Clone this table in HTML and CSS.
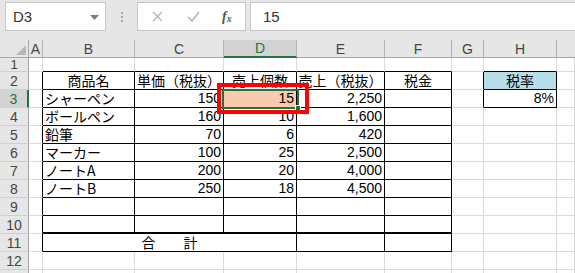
FILE: index.html
```html
<!DOCTYPE html>
<html lang="ja">
<head>
<meta charset="utf-8">
<link rel="stylesheet" href="styles.css">
</head>
<body>
<div class="app">
  <div class="toolbar">
    <div class="namebox">
      <span class="name">D3</span>
      <svg class="dd" width="9" height="5" viewBox="0 0 9 5"><polygon points="0,0 9,0 4.5,5" fill="#7a7a7a"/></svg>
    </div>
    <div class="dots"><i></i><i></i><i></i></div>
    <div class="fxgroup">
      <svg class="ico" width="11" height="11" viewBox="0 0 11 11"><path d="M1 1 L10 10 M10 1 L1 10" stroke="#b4b4b4" stroke-width="1.4" fill="none"/></svg>
      <svg class="ico" width="13" height="11" viewBox="0 0 13 11"><path d="M1 6 L5 10 L12 1" stroke="#b4b4b4" stroke-width="1.6" fill="none"/></svg>
      <span class="fx">f<sub>x</sub></span>
    </div>
    <div class="formula">15</div>
  </div>

  <div class="sheet">
    <!-- column headers -->
    <div class="ch corner"><svg width="10" height="10" viewBox="0 0 10 10"><polygon points="10,0 10,10 0,10" fill="#b8b8b8"/></svg></div>
    <div class="ch">A</div><div class="ch">B</div><div class="ch">C</div><div class="ch sel">D</div><div class="ch">E</div><div class="ch">F</div><div class="ch">G</div><div class="ch">H</div><div class="ch last"></div>

    <!-- row 1 -->
    <div class="rh short">1</div>
    <div class="c"></div><div class="c tb"></div><div class="c tb"></div><div class="c tb"></div><div class="c tb"></div><div class="c tb"></div><div class="c"></div><div class="c tb"></div><div class="c"></div>

    <!-- row 2 -->
    <div class="rh">2</div>
    <div class="c lb"></div><div class="c t ctr">商品名</div><div class="c t ctr">単価（税抜）</div><div class="c t ctr">売上個数</div><div class="c t ctr">売上（税抜）</div><div class="c t ctr">税金</div><div class="c lb"></div><div class="c t ctr blue">税率</div><div class="c"></div>

    <!-- row 3 -->
    <div class="rh sel">3</div>
    <div class="c lb"></div><div class="c t">シャーペン</div><div class="c t r num">150</div><div class="c t r num fill">15</div><div class="c t r num">2,250</div><div class="c t"></div><div class="c lb"></div><div class="c t r num">8%</div><div class="c"></div>

    <!-- row 4 -->
    <div class="rh">4</div>
    <div class="c lb"></div><div class="c t">ボールペン</div><div class="c t r num">160</div><div class="c t r num">10</div><div class="c t r num">1,600</div><div class="c t"></div><div class="c"></div><div class="c"></div><div class="c"></div>

    <!-- row 5 -->
    <div class="rh">5</div>
    <div class="c lb"></div><div class="c t">鉛筆</div><div class="c t r num">70</div><div class="c t r num">6</div><div class="c t r num">420</div><div class="c t"></div><div class="c"></div><div class="c"></div><div class="c"></div>

    <!-- row 6 -->
    <div class="rh">6</div>
    <div class="c lb"></div><div class="c t">マーカー</div><div class="c t r num">100</div><div class="c t r num">25</div><div class="c t r num">2,500</div><div class="c t"></div><div class="c"></div><div class="c"></div><div class="c"></div>

    <!-- row 7 -->
    <div class="rh">7</div>
    <div class="c lb"></div><div class="c t">ノートA</div><div class="c t r num">200</div><div class="c t r num">20</div><div class="c t r num">4,000</div><div class="c t"></div><div class="c"></div><div class="c"></div><div class="c"></div>

    <!-- row 8 -->
    <div class="rh">8</div>
    <div class="c lb"></div><div class="c t">ノートB</div><div class="c t r num">250</div><div class="c t r num">18</div><div class="c t r num">4,500</div><div class="c t"></div><div class="c"></div><div class="c"></div><div class="c"></div>

    <!-- row 9 -->
    <div class="rh">9</div>
    <div class="c lb"></div><div class="c t"></div><div class="c t"></div><div class="c t"></div><div class="c t"></div><div class="c t"></div><div class="c"></div><div class="c"></div><div class="c"></div>

    <!-- row 10 -->
    <div class="rh">10</div>
    <div class="c lb"></div><div class="c t thick"></div><div class="c t thick"></div><div class="c t thick"></div><div class="c t thick"></div><div class="c t thick"></div><div class="c"></div><div class="c"></div><div class="c"></div>

    <!-- row 11 -->
    <div class="rh">11</div>
    <div class="c lb"></div><div class="c t ctr span3">合　　計</div><div class="c t"></div><div class="c t"></div><div class="c"></div><div class="c"></div><div class="c"></div>

    <!-- row 12 -->
    <div class="rh">12</div>
    <div class="c"></div><div class="c"></div><div class="c"></div><div class="c"></div><div class="c"></div><div class="c"></div><div class="c"></div><div class="c"></div><div class="c"></div>

    <!-- row 13 (mostly below the visible area) -->
    <div class="rh"></div>
    <div class="c"></div><div class="c"></div><div class="c"></div><div class="c"></div><div class="c"></div><div class="c"></div><div class="c"></div><div class="c"></div><div class="c"></div>

    <div class="selbox"><span class="handle"></span></div>
    <div class="redbox"></div>
  </div>
</div>
</body>
</html>
```

FILE: styles.css
```css
* { box-sizing: border-box; }
html, body { margin: 0; padding: 0; }
body {
  width: 575px;
  height: 273px;
  overflow: hidden;
  background: #ffffff;
  font-family: "Noto Sans CJK JP", "Noto Sans", sans-serif;
}
.app { width: 575px; height: 273px; overflow: hidden; }

/* toolbar */
.toolbar {
  height: 40px;
  background: #e6e6e6;
  display: flex;
  align-items: flex-start;
  padding-top: 2px;
  padding-left: 5px;
}
.namebox {
  width: 101px;
  height: 29px;
  background: #fff;
  border: 1px solid #c6c6c6;
  display: flex;
  align-items: center;
  justify-content: space-between;
  padding: 0 6px 0 7px;
}
.name {
  font-family: "Liberation Sans", Arial, sans-serif;
  font-size: 15px;
  color: #333;
}
.dd { margin-top: 1px; }
.dots {
  width: 31px;
  height: 29px;
  display: flex;
  flex-direction: column;
  align-items: center;
  justify-content: center;
  gap: 2px;
}
.dots i {
  display: block;
  width: 2px;
  height: 2px;
  background: #a8a8a8;
}
.fxgroup {
  width: 109px;
  height: 29px;
  background: #fff;
  border: 1px solid #c6c6c6;
  display: flex;
  align-items: center;
  padding-left: 14px;
  gap: 24px;
}
.ico { display: block; }
.fx {
  font-family: "Liberation Serif", "Times New Roman", serif;
  font-style: italic;
  font-weight: bold;
  font-size: 14px;
  line-height: 16px;
  color: #555;
  margin-left: -2px;
}
.fx sub { font-size: 10px; line-height: 10px; vertical-align: -1px; }
.formula {
  margin-left: 4px;
  flex: 1;
  height: 29px;
  background: #fff;
  border: 1px solid #c6c6c6;
  border-right: none;
  font-family: "Liberation Sans", Arial, sans-serif;
  font-size: 15px;
  color: #333;
  display: flex;
  align-items: center;
  padding-left: 12px;
}

/* sheet grid */
.sheet {
  position: relative;
  display: grid;
  grid-template-columns: 29px 14px 92px 89px 73px 88px 67px 32px 73px 18px;
  grid-template-rows: 18px 14px repeat(12, 18px);
  height: 233px;
  overflow: hidden;
  font-size: 14px;
  line-height: 17px;
  color: #000;
}
.ch {
  background: #e6e6e6;
  border-right: 1px solid #b4b4b4;
  border-bottom: 1px solid #a6a6a6;
  display: flex;
  align-items: center;
  justify-content: center;
  color: #444;
  font-size: 14px;
  line-height: 16px;
  font-family: "Liberation Sans", Arial, sans-serif;
}
.ch.corner {
  align-items: flex-end;
  justify-content: flex-end;
  padding: 0 2px 2px 0;
  border-right-color: #a6a6a6;
}
.ch.last { border-right: none; }
.ch.sel {
  background: #d3d3d3;
  color: #217346;
  border-bottom: 2px solid #217346;
  line-height: 15px;
}
.rh {
  background: #e6e6e6;
  border-right: 1px solid #a6a6a6;
  border-bottom: 1px solid #cfcfcf;
  display: flex;
  align-items: center;
  justify-content: center;
  color: #444;
  font-size: 14px;
  line-height: 16px;
  font-family: "Liberation Sans", Arial, sans-serif;
}
.rh.short { line-height: 13px; font-size: 13px; }
.rh.sel {
  background: #d3d3d3;
  color: #217346;
  border-right: 2px solid #217346;
}

.c {
  border-right: 1px solid #dadada;
  border-bottom: 1px solid #dadada;
  display: flex;
  align-items: center;
  padding: 0 2px;
  white-space: nowrap;
  overflow: visible;
}
.c.num { font-family: "Liberation Sans", Arial, sans-serif; }
.c.t { border-right-color: #000; border-bottom-color: #000; }
.c.lb { border-right-color: #000; }
.c.tb { border-bottom-color: #000; }
.c.thick { border-bottom: 2px solid #000; }
.c.r { justify-content: flex-end; }
.c.ctr { justify-content: center; }
.c.span3 { grid-column: span 3; }
.c.blue { background: #b7dee8; }
.c.fill { background: #f8cbad; }

.selbox {
  position: absolute;
  left: 222px;
  top: 49px;
  width: 77px;
  height: 20px;
  border: 2px solid #217346;
}
.handle {
  position: absolute;
  right: -4px;
  bottom: -4px;
  width: 6px;
  height: 6px;
  background: #217346;
  border: 1px solid #fff;
}
.redbox {
  position: absolute;
  left: 217px;
  top: 43px;
  width: 92px;
  height: 31px;
  border: 4px solid #ff0000;
}
```
